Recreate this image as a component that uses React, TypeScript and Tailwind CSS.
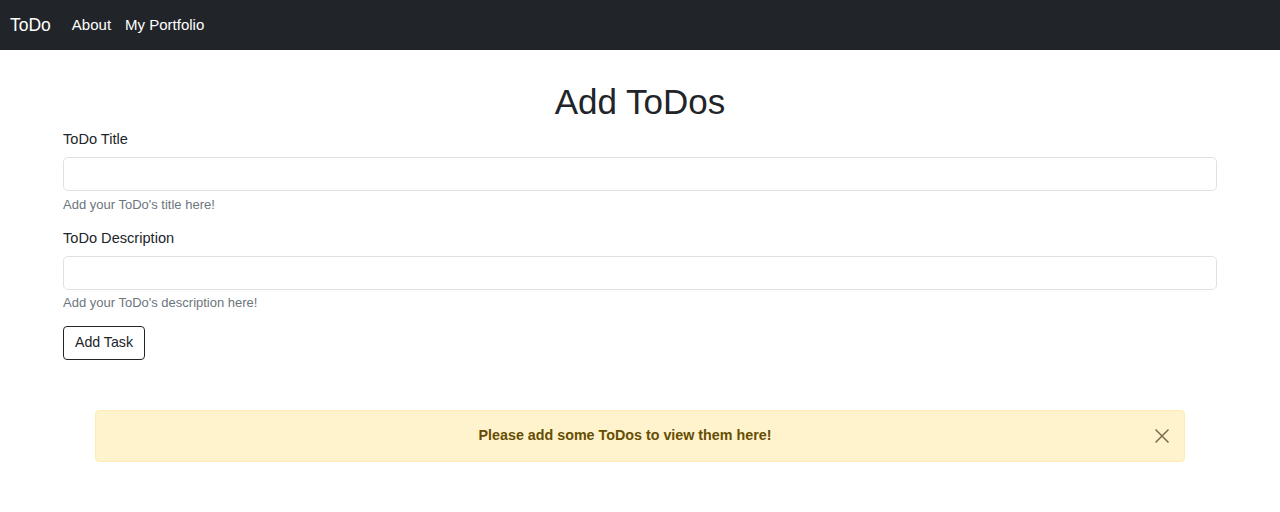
import React from "react";

export default function App() {
  return (
    <div className="min-h-[512px] bg-white text-[#212529]" style={{ fontFamily: '"Liberation Sans", Arial, sans-serif' }}>
      <nav className="h-[50px] bg-[#212529] flex items-center px-[10px]">
        <span className="text-white text-[17.5px] mr-[21px]">ToDo</span>
        <span className="text-white text-[15px] mr-[14px]">About</span>
        <span className="text-white text-[15px]">My Portfolio</span>
      </nav>
      <div className="px-[63px]">
        <h1 className="text-center text-[35px] leading-none pt-[34px] pb-[12px]">Add ToDos</h1>
        <div className="text-[14.6px] leading-[17px] mb-[9px]">ToDo Title</div>
        <div className="h-[34px] border border-[#dee2e6] rounded-[5px]" />
        <div className="text-[13px] text-[#6c757d] mt-[7px] mb-[18px] leading-[14px]">Add your ToDo's title here!</div>
        <div className="text-[14.6px] leading-[17px] mb-[9px]">ToDo Description</div>
        <div className="h-[34px] border border-[#dee2e6] rounded-[5px]" />
        <div className="text-[13px] text-[#6c757d] mt-[6px] mb-[16px] leading-[14px]">Add your ToDo's description here!</div>
        <button className="h-[34px] w-[82px] border border-[#212529] rounded-[4px] text-[14.2px] text-[#212529] bg-white">Add Task</button>
      </div>
      <div className="px-[95px] mt-[50px]">
        <div className="h-[52px] bg-[#fff3cd] border border-[#ffecb5] rounded-[4px] flex items-center justify-center relative">
          <span className="text-[14.3px] font-bold text-[#664d03] mr-[30px]">Please add some ToDos to view them here!</span>
          <svg className="absolute right-[14px] top-[17px]" width="16" height="16" viewBox="0 0 16 16">
            <path d="M1.5 1.5 L14.5 14.5 M14.5 1.5 L1.5 14.5" stroke="#7a6c4a" strokeWidth="1.5" />
          </svg>
        </div>
      </div>
    </div>
  );
}
